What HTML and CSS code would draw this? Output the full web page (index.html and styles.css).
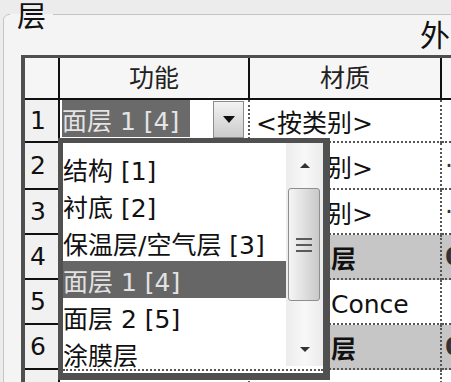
FILE: index.html
```html
<!DOCTYPE html>
<html lang="zh-CN">
<head>
<meta charset="utf-8">
<title>层</title>
<link rel="stylesheet" href="styles.css">
</head>
<body>
<fieldset class="group">
  <legend class="group-title">层</legend>
  <div class="side-label">外部边</div>
  <div class="layers">
    <div class="row head">
      <div class="cell num"></div>
      <div class="cell func">功能</div>
      <div class="cell mat">材质</div>
      <div class="cell thick">厚度</div>
    </div>
    <div class="row r1">
      <div class="cell num">1</div>
      <div class="cell func editing">
        <div class="combo">
          <span class="combo-value">面层 1 [4]</span>
          <span class="combo-btn"><span class="tri-down"></span></span>
        </div>
        <div class="dropdown">
          <div class="dd-body">
            <div class="dd-list">
              <div class="dd-item">结构 [1]</div>
              <div class="dd-item">衬底 [2]</div>
              <div class="dd-item">保温层/空气层 [3]</div>
              <div class="dd-item sel">面层 1 [4]</div>
              <div class="dd-item">面层 2 [5]</div>
              <div class="dd-item">涂膜层</div>
            </div>
            <div class="scrollbar">
              <div class="sb-up"><span class="tri-up"></span></div>
              <div class="sb-thumb"><span class="grip"></span></div>
              <div class="sb-down"><span class="tri-down small"></span></div>
            </div>
          </div>
        </div>
      </div>
      <div class="cell mat">&lt;按类别&gt;</div>
      <div class="cell thick"></div>
    </div>
    <div class="row r2">
      <div class="cell num">2</div>
      <div class="cell func">衬底 [2]</div>
      <div class="cell mat">&lt;按类别&gt;</div>
      <div class="cell thick">·</div>
    </div>
    <div class="row">
      <div class="cell num">3</div>
      <div class="cell func">保温层/空气层 [3]</div>
      <div class="cell mat">&lt;按类别&gt;</div>
      <div class="cell thick">·</div>
    </div>
    <div class="row core">
      <div class="cell num">4</div>
      <div class="cell func">核心边界</div>
      <div class="cell mat">包络上层</div>
      <div class="cell thick">0.0</div>
    </div>
    <div class="row">
      <div class="cell num">5</div>
      <div class="cell func">结构 [1]</div>
      <div class="cell mat">混凝土Conce</div>
      <div class="cell thick"></div>
    </div>
    <div class="row core">
      <div class="cell num">6</div>
      <div class="cell func">核心边界</div>
      <div class="cell mat">包络下层</div>
      <div class="cell thick">0.0</div>
    </div>
    <div class="row">
      <div class="cell num">7</div>
      <div class="cell func"></div>
      <div class="cell mat"></div>
      <div class="cell thick"></div>
    </div>
  </div>
</fieldset>
</body>
</html>
```

FILE: styles.css
```css
* {
  box-sizing: border-box;
}

html,
body {
  margin: 0;
  padding: 0;
  width: 451px;
  height: 382px;
  overflow: hidden;
}

body {
  background: #ececec;
  font-family: "DejaVu Sans", "Noto Sans CJK SC", sans-serif;
  font-size: 25px;
  color: #111;
}

.group {
  margin: 0 0 0 3px;
  padding: 0 0 0 6px;
  width: 760px;
  height: 440px;
  min-width: 0;
  border: 1px solid #c4c4c4;
  border-radius: 6px;
  background: #f4f4f4;
}

.group-title {
  padding: 0 7px;
  font-family: "Noto Sans CJK SC", sans-serif;
  font-size: 29px;
  line-height: 28px;
}

.side-label {
  margin: -9px 0 0 410px;
  height: 28px;
  font-family: "Noto Sans CJK SC", sans-serif;
  font-size: 30px;
  line-height: 28px;
  white-space: nowrap;
}

.layers {
  margin: 8px 0 0 11px;
  width: 700px;
  border-top: 3px solid #4f4f4f;
  border-left: 4px solid #4f4f4f;
  background: #fff;
}

.row {
  display: flex;
  height: 45px;
}

.row.head {
  height: 42px;
}

.row.r1 {
  height: 43px;
}

.row.r2 {
  height: 47px;
}

.cell {
  display: flex;
  align-items: center;
  flex: none;
  white-space: nowrap;
  overflow: hidden;
  border-bottom: 2px dotted #555;
}

.num {
  width: 35px;
  padding-left: 5px;
  background: #f1f1f1;
  border-right: 2px solid #111;
  border-bottom: 2px solid #111;
}

.func {
  width: 190px;
  border-right: 2px dotted #555;
}

.mat {
  width: 192px;
  padding-left: 6px;
  border-right: 2px dotted #555;
}

.thick {
  width: 200px;
  padding-left: 3px;
  color: #333;
}

.head .cell {
  justify-content: center;
  padding: 0 0 4px;
  background: #f6f6f6;
  color: #222;
  border-bottom: 2px solid #111;
  border-right: 2px solid #111;
}

.core .func,
.core .mat,
.core .thick {
  background: #c6c6c6;
  font-weight: bold;
}

.func.editing {
  position: relative;
  overflow: visible;
  align-items: stretch;
  border-bottom-color: transparent;
}

.combo {
  display: flex;
  align-items: flex-start;
  padding-left: 2px;
}

.combo-value {
  display: flex;
  align-items: center;
  width: 128px;
  height: 37px;
  background: #6a6a6a;
  color: #e4e4e4;
}

.combo-btn {
  display: flex;
  align-items: center;
  justify-content: center;
  margin: 1px 0 0 23px;
  width: 31px;
  height: 37px;
  border: 1px solid #8c8c8c;
  background: linear-gradient(#f3f3f3, #cbcbcb);
}

.tri-down {
  width: 0;
  height: 0;
  border-left: 6px solid transparent;
  border-right: 6px solid transparent;
  border-top: 7px solid #111;
}

.tri-down.small {
  border-left-width: 5px;
  border-right-width: 5px;
  border-top: 5px solid #333;
}

.tri-up {
  width: 0;
  height: 0;
  border-left: 5px solid transparent;
  border-right: 5px solid transparent;
  border-bottom: 5px solid #333;
}

.dropdown {
  position: absolute;
  left: -2px;
  top: 38px;
  z-index: 5;
  width: 272px;
  border: 5px solid #505050;
  border-right-width: 7px;
  border-bottom-width: 7px;
  background: #fff;
  font-weight: normal;
}

.dd-body {
  display: flex;
  height: 228px;
  margin-bottom: 2px;
  border-bottom: 2px dotted #555;
}

.dd-list {
  flex: 1;
  padding-top: 7px;
  overflow: hidden;
}

.dd-item {
  display: flex;
  align-items: center;
  height: 37px;
  white-space: nowrap;
}

.dd-item.sel {
  background: #666;
  color: #e2e2e2;
}

.scrollbar {
  display: flex;
  flex-direction: column;
  width: 37px;
  height: 223px;
  background: linear-gradient(90deg, #ececec, #f8f8f8 50%, #ebebeb);
}

.sb-up {
  display: flex;
  align-items: center;
  justify-content: center;
  height: 45px;
}

.sb-thumb {
  display: flex;
  align-items: center;
  justify-content: center;
  height: 113px;
  margin: 0 3px 0 2px;
  border: 1px solid #8e8e8e;
  border-radius: 3px;
  background: linear-gradient(90deg, #f5f5f5, #e2e2e2 45%, #c9c9c9);
}

.grip {
  width: 16px;
  height: 14px;
  background: repeating-linear-gradient(to bottom, #5a5a5a 0 2px, transparent 2px 6px);
}

.sb-down {
  display: flex;
  flex: 1;
  align-items: flex-end;
  justify-content: center;
  padding-bottom: 14px;
}
```
